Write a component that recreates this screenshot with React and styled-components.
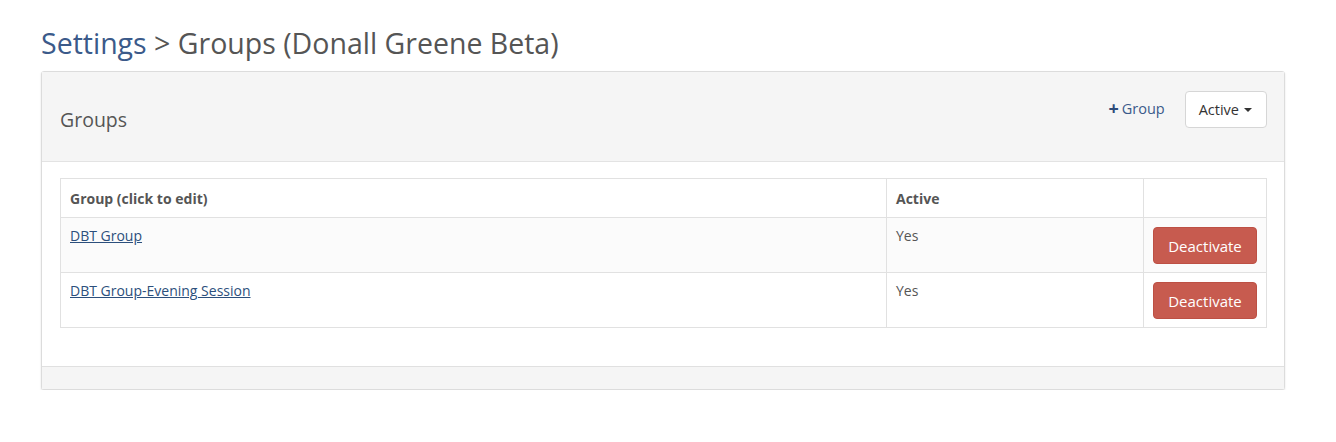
import React from "react";
import styled, { createGlobalStyle } from "styled-components";

const Global = createGlobalStyle`
  html, body { margin: 0; padding: 0; background: #fff; }
  body { font-family: "Open Sans", "Liberation Sans", sans-serif; color: #555; }
  * { box-sizing: border-box; }
`;

const Page = styled.div`
  padding: 26px 51px 0 41px;
`;

const Title = styled.h1`
  margin: 0 0 11px 0;
  font-size: 28.5px;
  line-height: 34px;
  font-weight: 400;
  color: #555;
`;

const Crumb = styled.span`
  color: #3b5a8a;
`;

const Panel = styled.div`
  border: 1px solid #dcdcdc;
  border-radius: 3px;
  box-shadow: 0 1px 2px rgba(0, 0, 0, 0.12);
  background: #fff;
`;

const PanelHeader = styled.div`
  display: flex;
  align-items: flex-start;
  justify-content: space-between;
  height: 90px;
  padding: 19px 17px 0 18px;
  background: #f5f5f5;
  border-bottom: 1px solid #e3e3e3;
`;

const PanelTitle = styled.h3`
  margin: 16px 0 0 0;
  font-size: 19.5px;
  line-height: 26px;
  font-weight: 400;
  color: #555;
`;

const Actions = styled.div`
  display: flex;
  align-items: center;
  gap: 20px;
`;

const AddLink = styled.a`
  display: flex;
  align-items: center;
  gap: 3px;
  font-size: 14.5px;
  color: #3b5a8a;
  text-decoration: none;
  margin-top: -3px;
`;

const Plus = styled.span`
  font-weight: 700;
  font-size: 18px;
  color: #2c4a78;
`;

const DropButton = styled.button`
  display: flex;
  align-items: center;
  gap: 5px;
  height: 37px;
  padding: 0 14px 0 13px;
  background: #fff;
  border: 1px solid #d6d6d6;
  border-radius: 4px;
  font-family: inherit;
  font-size: 14.5px;
  color: #333;
`;

const Caret = styled.span`
  width: 0;
  height: 0;
  border-left: 4px solid transparent;
  border-right: 4px solid transparent;
  border-top: 4px solid #333;
  margin-top: 1px;
`;

const PanelBody = styled.div`
  padding: 16px 17px 38px 18px;
`;

const Table = styled.table`
  width: 100%;
  border-collapse: collapse;
  border: 1px solid #e1e1e1;
  font-size: 14px;
`;

const Th = styled.th`
  text-align: left;
  font-weight: 700;
  color: #555;
  padding: 0 9px;
  height: 39px;
  border: 1px solid #e1e1e1;
  width: ${(p) => p.$w || "auto"};
`;

const Tr = styled.tr`
  background: ${(p) => (p.$striped ? "#fbfbfb" : "#fff")};
`;

const Td = styled.td`
  vertical-align: top;
  padding: 8px 9px 0 9px;
  height: 55px;
  border: 1px solid #e1e1e1;
  color: #555;
`;

const BtnCell = styled(Td)`
  text-align: right;
  padding: 9px 9px 0 9px;
`;

const Link = styled.a`
  color: #2c4f7c;
  text-decoration: underline;
`;

const DangerButton = styled.button`
  height: 37px;
  width: 104px;
  border: 1px solid #bd5044;
  border-radius: 4px;
  background: #c75b4f;
  color: #fff;
  font-family: inherit;
  font-size: 15px;
  padding: 0;
`;

const PanelFooter = styled.div`
  height: 23px;
  background: #f5f5f5;
  border-top: 1px solid #e0e0e0;
`;

const rows = ["DBT Group", "DBT Group-Evening Session"];

export default function App() {
  return (
    <>
      <Global />
      <Page>
        <Title>
          <Crumb>Settings</Crumb> &gt; Groups (Donall Greene Beta)
        </Title>
        <Panel>
          <PanelHeader>
            <PanelTitle>Groups</PanelTitle>
            <Actions>
              <AddLink href="#">
                <Plus>+</Plus>Group
              </AddLink>
              <DropButton>
                Active <Caret />
              </DropButton>
            </Actions>
          </PanelHeader>
          <PanelBody>
            <Table>
              <thead>
                <tr>
                  <Th>Group (click to edit)</Th>
                  <Th $w="257px">Active</Th>
                  <Th $w="123px"></Th>
                </tr>
              </thead>
              <tbody>
                {rows.map((r, i) => (
                  <Tr key={r} $striped={i % 2 === 0}>
                    <Td>
                      <Link href="#">{r}</Link>
                    </Td>
                    <Td>Yes</Td>
                    <BtnCell>
                      <DangerButton>Deactivate</DangerButton>
                    </BtnCell>
                  </Tr>
                ))}
              </tbody>
            </Table>
          </PanelBody>
          <PanelFooter />
        </Panel>
      </Page>
    </>
  );
}
